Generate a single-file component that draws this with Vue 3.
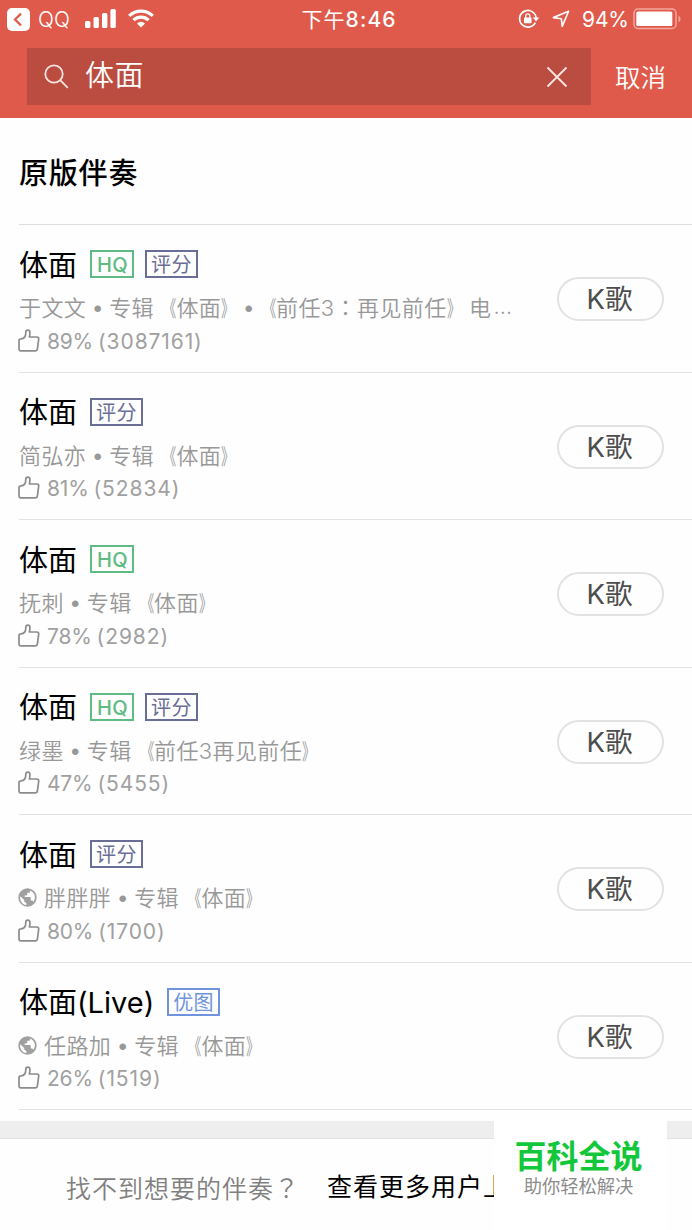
<script setup>
import { ref } from 'vue';

let keyword = ref('体面')

//songs of the result list, tags are drawn after the title
const songs = ref([
    { title: '体面', tags: ['HQ', '评分'], global: false, singer: '于文文', meta: '专辑《体面》•《前任3：再见前任》电…', like: '89%', count: '(3087161)' },
    { title: '体面', tags: ['评分'], global: false, singer: '简弘亦', meta: '专辑《体面》', like: '81%', count: '(52834)' },
    { title: '体面', tags: ['HQ'], global: false, singer: '抚刺', meta: '专辑《体面》', like: '78%', count: '(2982)' },
    { title: '体面', tags: ['HQ', '评分'], global: false, singer: '绿墨', meta: '专辑《前任3再见前任》', like: '47%', count: '(5455)' },
    { title: '体面', tags: ['评分'], global: true, singer: '胖胖胖', meta: '专辑《体面》', like: '80%', count: '(1700)' },
    { title: '体面(Live)', tags: ['优图'], global: true, singer: '任路加', meta: '专辑《体面》', like: '26%', count: '(1519)' }
])

const tagClass = { 'HQ': 'green', '评分': 'purple', '优图': 'blue' }

//punctuation gets its own span and class
const markClass = { '《': 'open', '》': 'close', '•': 'dot', '：': 'mid', '…': 'more-dots' }
const parts = (text) => text.split(/([《》•：…])/).filter(part => part)

const clear = () =>{
    keyword.value = ''
}
</script>

<template>
<div class="page">
    <header>
        <div class="status">
            <div class="left">
                <svg width="23" height="23" viewBox="0 0 23 23">
                    <rect width="23" height="23" rx="5" fill="#fff" />
                    <path d="M14 5.6 8 11.5l6 5.9" fill="none" stroke="#df5a4b" stroke-width="2.2" />
                </svg>
                <span class="app">QQ</span>
                <svg class="signal" width="31" height="19" viewBox="0 0 31 19" fill="#fff">
                    <rect x="0" y="12" width="5.4" height="7" rx="1.6" />
                    <rect x="8.5" y="8" width="5.4" height="11" rx="1.6" />
                    <rect x="17" y="4" width="5.4" height="15" rx="1.6" />
                    <rect x="25.4" y="0" width="5.4" height="19" rx="1.6" />
                </svg>
                <svg class="wifi" width="26" height="19" viewBox="0 0 26 19" fill="none" stroke="#fff" stroke-width="3.2">
                    <path d="M1.2 6.8a17 17 0 0 1 23.6 0" />
                    <path d="M5.4 11.2a11 11 0 0 1 15.2 0" />
                    <path d="M13 18.4l-4-4a5.8 5.8 0 0 1 8 0z" fill="#fff" stroke="none" />
                </svg>
            </div>
            <div class="time">下午<span>8:46</span></div>
            <div class="right">
                <svg width="22" height="20" viewBox="0 0 22 20" fill="none" stroke="#fff" stroke-width="1.7">
                    <path d="M17.3 13.6a8.3 8.3 0 1 1 .9-4" />
                    <path d="M14.8 8.6h6.4l-3.2 4z" fill="#fff" stroke="none" />
                    <rect x="6" y="8.6" width="7.6" height="5.6" rx="0.8" fill="#fff" stroke="none" />
                    <path d="M7.7 9V7a2.1 2.1 0 0 1 4.2 0v2" stroke-width="1.3" />
                </svg>
                <svg class="arrow" width="18" height="18" viewBox="0 0 18 18" fill="none" stroke="#fff" stroke-width="1.6" stroke-linejoin="round">
                    <path d="M16.6 1.2 1.4 7.6l8 1.2 .8 7.6z" />
                </svg>
                <span class="percent">94%</span>
                <svg class="battery" width="49" height="22" viewBox="0 0 49 22">
                    <rect x="1" y="1" width="42" height="19.5" rx="4" fill="none" stroke="#f3a79f" stroke-width="1.5" />
                    <rect x="3.3" y="3.5" width="36" height="14.5" rx="1.5" fill="#fff" />
                    <path d="M45.5 7.5a4 4 0 0 1 0 7z" fill="#f3a79f" />
                </svg>
            </div>
        </div>
        <div class="search">
            <div class="box">
                <svg width="25" height="25" viewBox="0 0 25 25" fill="none" stroke="#fbe6e3" stroke-width="1.8">
                    <circle cx="10" cy="10" r="8.7" />
                    <path d="M16.2 16.2l7.6 7.6" />
                </svg>
                <span class="keyword">{{ keyword }}</span>
                <svg @click="clear" width="22" height="22" viewBox="0 0 22 22" stroke="#fbe6e3" stroke-width="1.8">
                    <path d="M1.5 1.5l19 19M20.5 1.5l-19 19" />
                </svg>
            </div>
            <span class="cancel">取消</span>
        </div>
    </header>

    <h2>原版伴奏</h2>

    <ul>
        <li v-for="(song, index) in songs" :key="index">
            <div class="info">
                <div class="title">
                    <span class="name">{{ song.title }}</span>
                    <span v-for="tag in song.tags" :key="tag" class="tag" :class="tagClass[tag]">{{ tag }}</span>
                </div>
                <div class="meta">
                    <svg v-if="song.global" width="19" height="19" viewBox="0 0 19 19">
                        <circle cx="9.5" cy="9.5" r="9.2" fill="#a0a0a0" />
                        <path d="M2.2 8.2l4 3.8v1.4l2.2 1.8v1.9C4.4 16.6 1.5 12.6 2.2 8.2z" fill="#fff" />
                        <path d="M11.3 2.2c2.6.6 4.8 2.7 5.4 5.4.5 2.2 0 4.5-1.4 6.3-.3-.8-.9-1.3-1.7-1.3h-.9v-2.6c0-.5-.4-.9-.9-.9H6.7V7.4h1.7c.5 0 .9-.4.9-.9V4.8h1.5c.9 0 1.4-.7 1.4-1.6z" fill="#fff" />
                    </svg>
                    <span>{{ song.singer }}</span>
                    <span class="dot wide">•</span>
                    <span v-for="(part, i) in parts(song.meta)" :key="i" :class="markClass[part]">{{ part }}</span>
                </div>
                <div class="like">
                    <svg width="22" height="23" viewBox="0 0 22 23" fill="none" stroke="#8c8c8c" stroke-width="1.7" stroke-linejoin="round">
                        <path d="M3 9.8C6.4 9.6 7.8 6.6 7.8 3.4 7.8.4 11.8.4 11.9 3.4c0 1.8-.2 3-.5 4.6h7.4c1.4 0 2.1.8 1.9 2.2l-1.3 9.6c-.2 1.4-.9 2-2.2 2H2.8c-1.2 0-1.8-.6-1.8-1.7v-8.3c0-1.2.7-2 2-2z" />
                    </svg>
                    <span class="rate">{{ song.like }}</span>
                    <span class="count">{{ song.count }}</span>
                </div>
            </div>
            <button>K歌</button>
        </li>
    </ul>

    <div class="gap"></div>

    <footer>
        <span class="ask">找不到想要的伴奏<span class="mid">？</span></span>
        <span class="more">查看更多用户上</span>
    </footer>

    <div class="badge">
        <div class="brand">百科全说</div>
        <div class="slogan">助你轻松解决</div>
    </div>
</div>
</template>

<style>
body{
    margin: 0;
    background: #fff;
}
</style>

<style scoped>
.page{
    position: relative;
    width: 692px;
    height: 1230px;
    overflow: hidden;
    background: #fefefe;
    font-family: Inter, "Noto Sans CJK SC", sans-serif;
    text-spacing-trim: space-all;
    white-space: nowrap;
}

svg{
    display: block;
    flex: none;
}

header{
    height: 118px;
    background: #df5a4b;
    color: #fff;
}

.status{
    display: flex;
    justify-content: space-between;
    height: 38px;
    padding: 0 10px 0 7px;
}

.left, .right{
    display: flex;
    align-items: center;
    width: 260px;
}

.right{
    justify-content: flex-end;
}

.app{
    width: 34px;
    margin-left: 8px;
    font-size: 21px;
    font-weight: 300;
}

.signal{
    margin-left: 13px;
    margin-top: -1px;
}

.wifi{
    margin-left: 12px;
    margin-top: -2px;
}

.time{
    padding: 1px 0 0 9px;
    font-size: 21px;
    line-height: 38px;
    letter-spacing: 1.1px;
}

.time span{
    font-weight: 500;
}

.arrow{
    margin-left: 12px;
}

.percent{
    width: 46px;
    margin-left: 12px;
    font-size: 21px;
    letter-spacing: -0.1px;
}

.battery{
    margin-left: 5px;
}

.search{
    display: flex;
    align-items: center;
    padding: 10px 0 0 27px;
}

.box{
    display: flex;
    align-items: center;
    box-sizing: border-box;
    width: 564px;
    height: 57px;
    padding: 0 23px 0 17px;
    background: #bb4c40;
}

.keyword{
    flex: 1;
    margin-left: 16px;
    margin-top: -1px;
    font-size: 29px;
    font-weight: 350;
    line-height: 40px;
    letter-spacing: 0.5px;
}

.cancel{
    margin-left: 24px;
    margin-top: 2px;
    font-size: 25.5px;
    font-weight: 350;
    line-height: 40px;
}

h2{
    box-sizing: border-box;
    height: 107px;
    margin: 0 0 0 19px;
    padding-top: 4px;
    border-bottom: 1px solid #dedede;
    font-size: 29px;
    font-weight: 500;
    line-height: 104px;
    letter-spacing: 0.8px;
    color: #000;
}

ul{
    margin: 0;
    padding: 0;
    list-style-type: none;
}

li{
    display: flex;
    justify-content: space-between;
    box-sizing: border-box;
    height: 147.5px;
    margin-left: 19px;
    padding-right: 28px;
    border-bottom: 1px solid #e2e2e2;
}

.title{
    display: flex;
    align-items: center;
    height: 40px;
    margin-top: 19px;
}

.name{
    margin-right: 2px;
    padding-top: 3px;
    font-size: 29px;
    line-height: 40px;
    color: #000;
}

.tag{
    box-sizing: border-box;
    height: 28px;
    margin-left: 11px;
    padding: 1px 4px 0 5px;
    border: 2px solid;
    font-size: 20px;
    font-weight: 500;
    line-height: 24px;
    letter-spacing: 0.4px;
}

.green{
    color: #5dbb83;
}

.purple, .blue{
    padding-left: 4px;
    font-weight: 400;
}

.purple{
    color: #6a6e96;
}

.blue{
    color: #6f93dc;
}

.meta{
    display: flex;
    align-items: center;
    height: 34px;
    margin-top: 5px;
    font-size: 22px;
    font-weight: 350;
    letter-spacing: 0.4px;
    color: #989898;
}

.meta svg{
    margin-right: 7px;
    margin-left: -1px;
    margin-top: 3px;
}

.dot{
    width: 10px;
    padding-top: 6px;
    text-align: center;
    font-family: "Liberation Sans", sans-serif;
    font-size: 24px;
    letter-spacing: 0;
}

.wide{
    width: 23px;
}

/* narrow brackets that still take a full cell */
.open{
    transform: scaleX(0.6);
    transform-origin: right;
}

.close{
    transform: scaleX(0.6);
    transform-origin: left;
}

.mid{
    font-family: "Noto Sans CJK TC", sans-serif;
}

.more-dots{
    margin-left: 2px;
    letter-spacing: 0;
}

.like{
    display: flex;
    align-items: center;
    height: 34px;
    margin-top: 1px;
    font-size: 21px;
    color: #a0a0a0;
}

.like svg{
    margin-left: -1px;
    margin-top: -2px;
}

.rate{
    margin-left: 7px;
    letter-spacing: -0.2px;
}

.count{
    margin-left: 5px;
    letter-spacing: 0.9px;
}

button{
    box-sizing: border-box;
    width: 107px;
    height: 44px;
    margin-top: 52px;
    padding: 0 2px 0 0;
    border: 2px solid #e2e2e2;
    border-radius: 22px;
    background: #fefefe;
    font-family: inherit;
    font-size: 27.5px;
    line-height: 38px;
    color: #4d4d4d;
}

.gap{
    box-sizing: border-box;
    height: 18px;
    margin-top: 11px;
    background: #eeeeee;
    border-bottom: 1px solid #e2e2e2;
}

footer{
    display: flex;
    padding-left: 66px;
    font-size: 25px;
    line-height: 96px;
    letter-spacing: 1px;
}

.ask{
    width: 261px;
    font-weight: 350;
    color: #808080;
}

.more{
    width: 167px;
    overflow: hidden;
    color: #000;
}

/* site badge that lies over the footer */
.badge{
    position: absolute;
    left: 494px;
    top: 1119px;
    width: 173px;
    height: 111px;
    box-sizing: border-box;
    padding: 16px 4px 0 0;
    background: #fff;
    text-align: center;
}

.brand{
    font-size: 32px;
    font-weight: 700;
    line-height: 44px;
    color: #12c83a;
}

.slogan{
    margin-top: -6px;
    font-size: 18.3px;
    line-height: 26px;
    color: #8c8c8c;
}
</style>
